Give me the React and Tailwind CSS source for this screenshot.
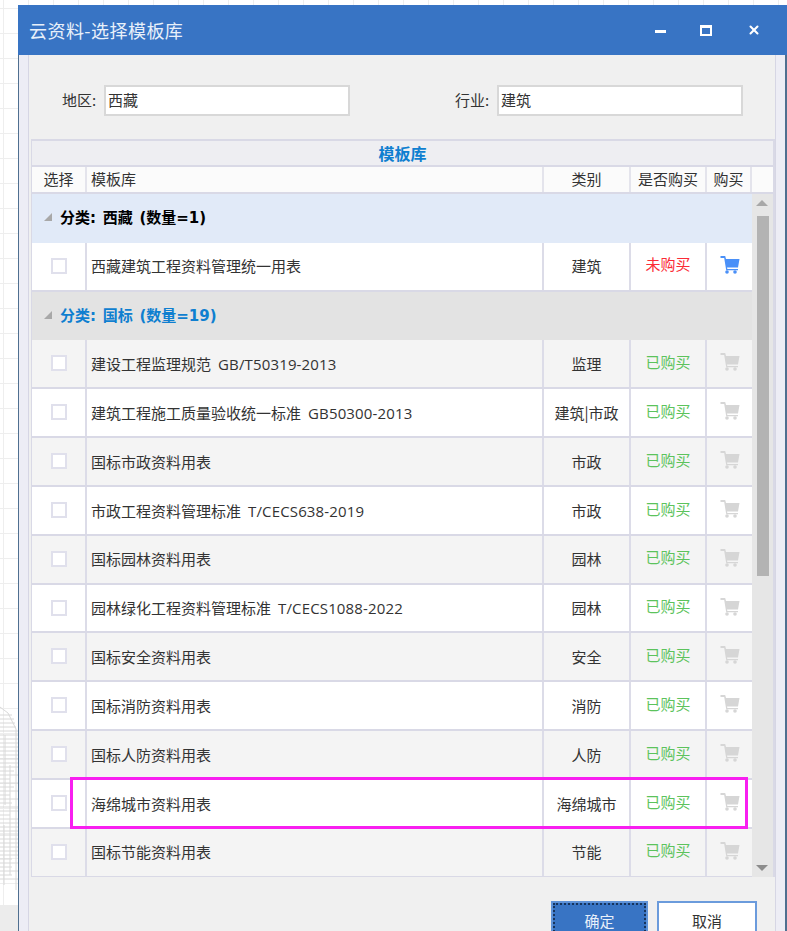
import { X } from 'lucide-react';

const rows = [
  { name: '建设工程监理规范', code: 'GB/T50319-2013', type: '监理' },
  { name: '建筑工程施工质量验收统一标准', code: 'GB50300-2013', type: '建筑|市政' },
  { name: '国标市政资料用表', type: '市政' },
  { name: '市政工程资料管理标准', code: 'T/CECS638-2019', type: '市政' },
  { name: '国标园林资料用表', type: '园林' },
  { name: '园林绿化工程资料管理标准', code: 'T/CECS1088-2022', type: '园林' },
  { name: '国标安全资料用表', type: '安全' },
  { name: '国标消防资料用表', type: '消防' },
  { name: '国标人防资料用表', type: '人防' },
  { name: '海绵城市资料用表', type: '海绵城市' },
  { name: '国标节能资料用表', type: '节能' }
];

function CartIcon({ className }) {
  return (
    <svg viewBox="0 0 20 18" className={className} fill="currentColor">
      <path d="M0.5 0H5.2L6 3H19.5L18 11.5H7L7.4 13H18V14.2H6.2L4.2 2H0.5Z" />
      <circle cx="7" cy="16" r="1.8" />
      <circle cx="15" cy="16" r="1.8" />
    </svg>
  );
}

function Row({ row, bg, bought }) {
  return (
    <div className={`grid h-[48.83px] grid-cols-[55px_457px_87px_76px_45px] border-b-2 border-[#d9d9e6] text-[15px] text-[#333] ${bg}`}>
      <div className="flex justify-center border-r-2 border-[#dcdce8] pt-[15px]">
        <div className="h-[16px] w-[16px] border-2 border-[#e0e0ec] bg-white" />
      </div>
      <div className="flex items-center border-r-2 border-[#dcdce8] pt-[1px] pl-[4px]">
        {row.name}
        {row.code && <span className="ml-[7px] font-['Open_Sans',sans-serif] tracking-[0.15px]">{row.code}</span>}
      </div>
      <div className="flex items-center justify-center border-r-2 border-[#dcdce8] pt-[1px]">{row.type}</div>
      <div className={`flex items-center justify-center border-r-2 border-[#dcdce8] pb-[3px] ${bought ? 'text-[#5cc35c]' : 'text-[#fb2b36]'}`}>
        {bought ? '已购买' : '未购买'}
      </div>
      <div className="flex items-center justify-center pb-[3px]">
        <CartIcon className={`h-[18px] w-[20px] ${bought ? 'text-[#d6d6d6]' : 'text-[#4a90f8]'}`} />
      </div>
    </div>
  );
}

function GroupRow({ label, className }) {
  return (
    <div className={`flex h-[48.83px] items-center border-b-2 pt-[2px] pl-[12px] font-['DejaVu_Sans','Noto_Sans_CJK_SC',sans-serif] text-[15px] font-bold [word-spacing:1.5px] ${className}`}>
      <svg viewBox="0 0 8 8" className="mr-[8px] mb-[2px] h-[8px] w-[8px] text-[#a8a8a8]" fill="currentColor">
        <path d="M8 0V8H0Z" />
      </svg>
      {label}
    </div>
  );
}

export default function App() {
  return (
    <div className="relative h-[931px] w-[787px] overflow-hidden bg-white bg-[linear-gradient(#eeeeee_1px,transparent_1px),linear-gradient(90deg,#eeeeee_1px,transparent_1px)] bg-[size:25px_25px] bg-[position:3px_8px] font-['Noto_Sans_CJK_SC','Noto_Sans',sans-serif]">
      {/* faint drawing behind the dialog */}
      <svg className="absolute top-[705px] left-0 h-[185px] w-[18px] text-[#d8d8d8]" viewBox="0 0 18 185" fill="none" stroke="currentColor">
        <path d="M0 2L8 8L16 24V185M0 10H12M0 14H14M0 18H15M0 22H16M0 26H18M0 30H18M0 34H18M0 38H18M0 42H18M0 46H18M0 50H18M0 54H18M0 58H18M0 62H18M0 66H14M0 70H18M0 74H10M0 78H18M0 82H14M0 86H18M0 90H10M0 94H18M0 98H12M0 102H18M0 106H18M0 110H10M0 114H18M0 118H18M0 122H18M0 126H18M0 130H18M0 134H18M0 138H18M0 142H18M0 146H18M0 150H18M0 154H12M0 158H18M0 162H12M0 166H18M0 170H12M0 174H18M5 30V100M10 60V170M4 120V180" />
      </svg>
      <div className="absolute top-[905px] left-0 h-[26px] w-[18px] bg-[#ececec]" />

      {/* dialog */}
      <div className="relative ml-[18px] flex h-[960px] w-[769px] flex-col pt-[5px]">
        <div className="flex h-[50px] shrink-0 items-center bg-[#3874c4] pl-[11px] text-[18px] tracking-[0.45px] text-[#e8f0fa]">
          <span className="flex-1">云资料-选择模板库</span>
          <div className="mt-[3px] mr-[34px] h-[3px] w-[11px] bg-white" />
          <div className="mr-[35px] h-[11px] w-[12px] border-2 border-t-[3px] border-white" />
          <X className="mr-[26px] h-[14px] w-[14px] text-white" strokeWidth={3.5} />
        </div>

        <div className="flex flex-1 border-r-2 border-l border-r-[#4f6f90] border-l-[#4f6f90] bg-[#ededf5] pr-[9px] pl-[9px]">
          <div className="flex-1 border-x border-[#d6d6e4] bg-[#f0f0f0]">
            <div className="flex h-[84px] items-center pt-[6px] pl-[33px] text-[15px] text-[#333]">
              <span className="w-[42px]">地区:</span>
              <div className="flex h-[31px] w-[246px] items-center border-2 border-[#d8d8d8] bg-white pl-[2px]">西藏</div>
              <span className="ml-[105px] w-[42px]">行业:</span>
              <div className="flex h-[31px] w-[246px] items-center border-2 border-[#d8d8d8] bg-white pl-[2px]">建筑</div>
            </div>

            <div className="ml-[2px] h-[738px] w-[744px] border-t-2 border-r-2 border-b-2 border-l border-[#d9d9e6]">
              <div className="flex h-[26px] items-center justify-center border-b-2 border-[#d9d9e6] bg-[#eeeef2] text-[16px] font-bold text-[#0f7fd0]">
                模板库
              </div>
              <div className="grid h-[27px] grid-cols-[55px_457px_87px_76px_45px_21px] border-b-2 border-[#d9d9e6] bg-[#fbfbfb] text-[15px] text-[#333]">
                <div className="flex items-center justify-center border-r-2 border-[#e4e4ec]">选择</div>
                <div className="flex items-center border-r-2 border-[#e4e4ec] pl-[4px]">模板库</div>
                <div className="flex items-center justify-center border-r-2 border-[#e4e4ec]">类别</div>
                <div className="flex items-center justify-center border-r-2 border-[#e4e4ec]">是否购买</div>
                <div className="flex items-center justify-center border-r-2 border-[#e4e4ec]">购买</div>
                <div />
              </div>

              <div className="flex h-[683px] overflow-hidden">
                <div className="w-[720px] shrink-0">
                  <GroupRow label="分类: 西藏 (数量=1)" className="border-[#e1eaf8] bg-[#e1eaf8] text-black" />
                  <Row row={{ name: '西藏建筑工程资料管理统一用表', type: '建筑' }} bg="bg-white" bought={false} />
                  <GroupRow label="分类: 国标 (数量=19)" className="border-[#e3e3e3] bg-[#e3e3e3] text-[#0f7fd0]" />
                  {rows.map((row, i) => (
                    <Row key={row.name} row={row} bg={i % 2 === 0 ? 'bg-[#f4f4f4]' : 'bg-white'} bought />
                  ))}
                </div>
                <div className="relative flex-1 bg-[#e6e6e6]">
                  <div className="absolute top-[6px] left-[4px] h-0 w-0 border-x-[6px] border-b-[6px] border-x-transparent border-b-[#a8a8a8]" />
                  <div className="mx-auto mt-[22px] h-[360px] w-[12px] bg-[#b3b3b3]" />
                  <div className="absolute bottom-[6px] left-[4px] h-0 w-0 border-x-[6px] border-t-[6px] border-x-transparent border-t-[#8c8c8c]" />
                </div>
              </div>
            </div>

            <div className="mt-[24px] flex pl-[522px] text-[15px]">
              <button className="h-[40px] w-[97px] border-2 border-[#5f93d8] bg-[#3874c4] text-[#e8f0fa] outline-2 -outline-offset-4 outline-dotted outline-[#17345c]">确定</button>
              <button className="ml-[9px] h-[40px] w-[100px] border-2 border-[#6b9bdc] bg-white text-[#333]">取消</button>
            </div>
          </div>
        </div>
      </div>

      {/* highlight annotation */}
      <div className="absolute top-[777px] left-[70px] h-[52px] w-[678px] border-[3px] border-[#f81ff0]" />
    </div>
  );
}
